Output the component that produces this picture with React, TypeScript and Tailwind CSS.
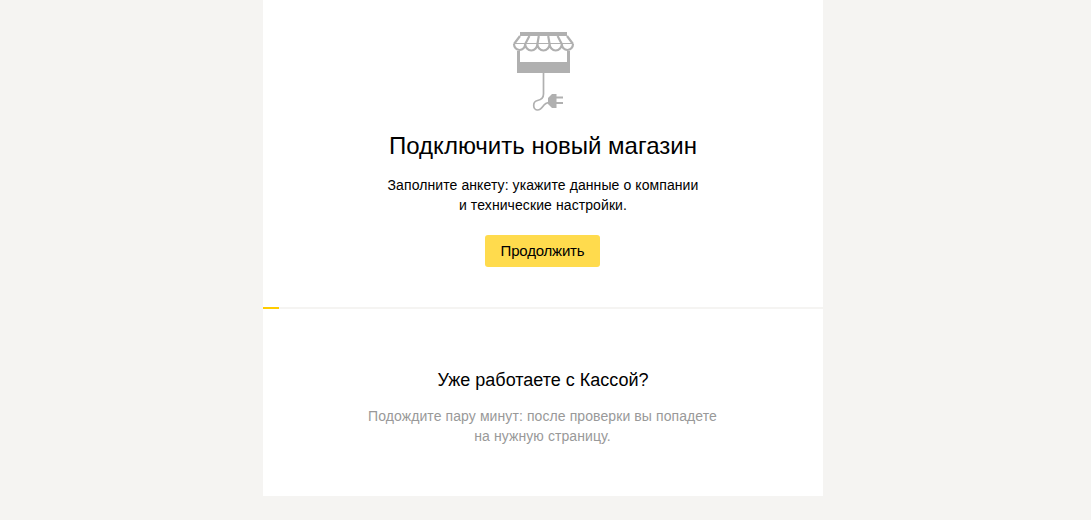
export default function App() {
  return (
    <div className="min-h-[520px] bg-[#f5f4f2] font-['Liberation_Sans',Arial,sans-serif] text-black">
      <div className="ml-[263px] h-[496px] w-[560px] bg-white">
        <section className="flex h-[307px] flex-col items-center pt-[31px]">
          <svg width="64" height="82" viewBox="0 0 64 82" fill="none" className="block">
            <rect x="9" y="1" width="47" height="4" fill="#b0b0b0" />
            <rect x="6" y="20" width="3" height="22" fill="#b0b0b0" />
            <rect x="56" y="20" width="3" height="22" fill="#b0b0b0" />
            <rect x="6" y="31" width="53" height="11" fill="#b0b0b0" />
            <path d="M9 5 L3 13 M18.4 5 L14.2 13 M27.8 5 L26.4 13 M37.2 5 L38.6 13 M46.6 5 L50.8 13 M56 5 L62 13" stroke="#b0b0b0" strokeWidth="2.2" />
            <path d="M3 13 H62" stroke="#b0b0b0" strokeWidth="2" />
            <path d="M3 13 A5.6 6 0 0 0 14.2 13 A6.1 6.5 0 0 0 26.4 13 A6.1 6.5 0 0 0 38.6 13 A6.1 6.5 0 0 0 50.8 13 A5.6 6 0 0 0 62 13" stroke="#b0b0b0" strokeWidth="2.2" fill="#fff" />
            <path d="M32.5 42 V63 C32.5 67 29 69 26.5 69.5 C24 70 22.7 72 22.7 74.5 C22.7 77 24.5 79 26.5 79 C29.5 79 31.5 76 33 74 C34 72.8 35.5 72 37.5 71.5" stroke="#b0b0b0" strokeWidth="1.7" />
            <path d="M37 73 V67 L41 63 H45.5 V77 H41 Z" fill="#b0b0b0" />
            <path d="M45 66.5 H52 M45 72 H52" stroke="#b0b0b0" strokeWidth="2" />
          </svg>
          <h1 className="mt-[18px] text-[24px] leading-[30px] font-normal">Подключить новый магазин</h1>
          <p className="mt-[14px] text-center text-[14px] leading-[20px] tracking-[0.09px]">
            Заполните анкету: укажите данные о компании
            <br />и технические настройки.
          </p>
          <button className="mt-[20px] mr-[1px] h-[32px] w-[115px] rounded-[3px] bg-[#ffdb4d] text-[15px] leading-[32px] tracking-[-0.2px]">
            Продолжить
          </button>
        </section>
        <div className="h-[2px] bg-[#f5f4f2]">
          <div className="h-[2px] w-[16px] bg-[#ffcc00]" />
        </div>
        <section className="flex flex-col items-center pt-[59px]">
          <h2 className="text-[18px] leading-[24px] font-normal">Уже работаете с Кассой?</h2>
          <p className="mt-[14px] mr-[1px] text-center text-[14px] leading-[20px] tracking-[0.09px] text-[#999]">
            Подождите пару минут: после проверки вы попадете
            <br />
            на нужную страницу.
          </p>
        </section>
      </div>
    </div>
  );
}
